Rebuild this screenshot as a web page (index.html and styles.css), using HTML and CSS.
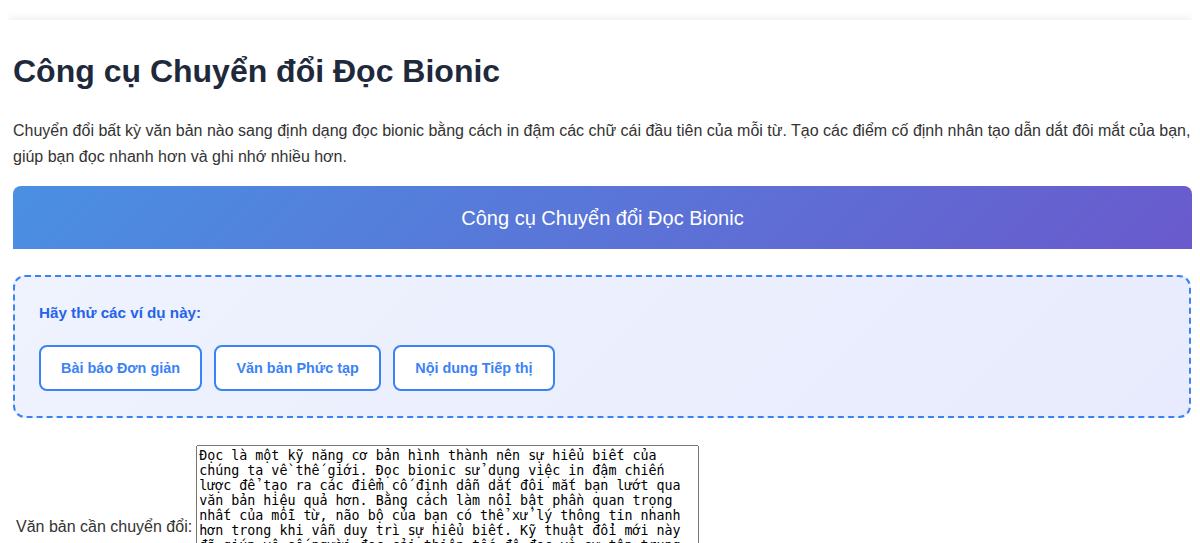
FILE: index.html
```html
<!DOCTYPE html>
<html lang="vi">
<head>
  <meta charset="UTF-8">
  <meta name="viewport" content="width=device-width, initial-scale=1.0">
  <title>Công cụ Chuyển đổi Đọc Bionic</title>
  <link rel="stylesheet" href="styles.css">
</head>
<body>
  <div class="page">
    <h1>Công cụ Chuyển đổi Đọc Bionic</h1>
    <p class="intro">Chuyển đổi bất kỳ văn bản nào sang định dạng đọc bionic bằng cách in đậm các chữ cái đầu tiên của mỗi từ. Tạo các điểm cố định nhân tạo dẫn dắt đôi mắt của bạn, giúp bạn đọc nhanh hơn và ghi nhớ nhiều hơn.</p>

    <div class="tool-header">Công cụ Chuyển đổi Đọc Bionic</div>

    <div class="examples">
      <div class="examples-title">Hãy thử các ví dụ này:</div>
      <div class="example-buttons">
        <button type="button" class="example-btn">Bài báo Đơn giản</button>
        <button type="button" class="example-btn">Văn bản Phức tạp</button>
        <button type="button" class="example-btn">Nội dung Tiếp thị</button>
      </div>
    </div>

    <table class="form-table">
      <tr>
        <td><label for="inputText">Văn bản cần chuyển đổi:</label></td>
        <td><textarea id="inputText" rows="10" cols="60">Đọc là một kỹ năng cơ bản hình thành nên sự hiểu biết của chúng ta về thế giới. Đọc bionic sử dụng việc in đậm chiến lược để tạo ra các điểm cố định dẫn dắt đôi mắt bạn lướt qua văn bản hiệu quả hơn. Bằng cách làm nổi bật phần quan trọng nhất của mỗi từ, não bộ của bạn có thể xử lý thông tin nhanh hơn trong khi vẫn duy trì sự hiểu biết. Kỹ thuật đổi mới này đã giúp vô số người đọc cải thiện tốc độ đọc và sự tập trung của họ trên nhiều loại nội dung khác nhau.</textarea></td>
      </tr>
    </table>
  </div>
</body>
</html>
```

FILE: styles.css
```css
body { margin: 8px; font-family: 'Liberation Sans', Arial, sans-serif; line-height: 1.6; color: #333; background: #fff; }
.page { margin-top: 12px; padding: 5px 0 5px 5px; background: #fff; box-shadow: 0 0 10px rgba(0,0,0,0.1); }
h1 { font-size: 32px; color: #1e293b; margin: 21px 0; }
.intro { font-size: 16px; margin: 0 0 17px; }
.tool-header { background: linear-gradient(135deg, #4a90e2 0%, #6a5acd 100%); color: #fff; text-align: center; font-size: 20px; padding: 15.5px 20px; border-radius: 8px 8px 0 0; }
.examples { margin: 26px 1px 24px 0; padding: 24px 24px 25px; border: 2px dashed #3b82f6; border-radius: 12px; background: linear-gradient(135deg, #eff3fe 0%, #e7ebfd 100%); }
.examples-title { font-size: 15.2px; line-height: 24px; font-weight: bold; color: #2563eb; margin-bottom: 20px; }
.example-buttons { display: flex; gap: 12.5px; }
.example-btn { font-family: 'Liberation Sans', Arial, sans-serif; font-size: 14.4px; font-weight: bold; line-height: 22px; color: #3b82f6; background: #fff; border: 2px solid #3b82f6; border-radius: 8px; padding: 10px 20px; cursor: pointer; }
.example-btn:hover { background: #eff6ff; }
.form-table { font-size: 16px; }
```
